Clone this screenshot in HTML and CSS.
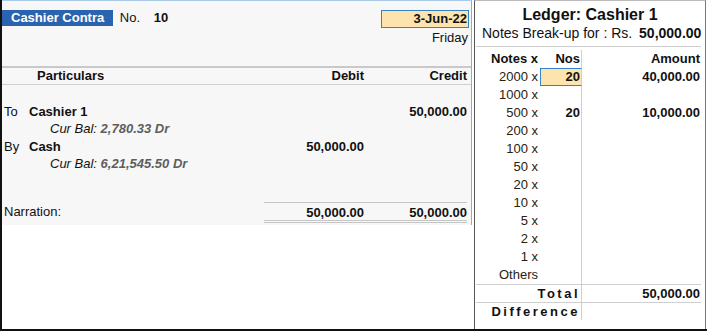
FILE: index.html
```html
<!DOCTYPE html>
<html lang="en">
<head>
  <meta charset="UTF-8">
  <title>Cashier Contra</title>
  <link rel="stylesheet" href="styles.css">
</head>
<body>
  <div class="screen">
    <div class="voucher">
      <div class="voucher-body">
        <div class="v-head">
          <div class="v-type">
            <span class="type-tag">Cashier Contra</span>
            <span class="no-lbl">No.</span>
            <b>10</b>
          </div>
          <div class="v-date">
            <span class="date-box">3-Jun-22</span>
            <span class="day">Friday</span>
          </div>
        </div>

        <div class="grid cols-head">
          <span class="part-h">Particulars</span>
          <span class="num">Debit</span>
          <span class="num">Credit</span>
        </div>

        <div class="entries">
          <div class="grid">
            <span><span class="dir">To</span><b>Cashier 1</b></span>
            <span></span>
            <b class="num">50,000.00</b>
          </div>
          <div class="bal"><i>Cur Bal:</i> <b>2,780.33 Dr</b></div>
          <div class="grid">
            <span><span class="dir">By</span><b>Cash</b></span>
            <b class="num">50,000.00</b>
            <span></span>
          </div>
          <div class="bal"><i>Cur Bal:</i> <b>6,21,545.50 Dr</b></div>
        </div>

        <div class="grid narration">
          <span>Narration:</span>
          <b class="num tot">50,000.00</b>
          <b class="num tot">50,000.00</b>
        </div>
      </div>
    </div>

    <div class="notes-panel">
      <div class="np-title">Ledger: Cashier 1</div>
      <div class="np-sub">Notes Break-up for : Rs. <b>50,000.00</b></div>

      <div class="np-table">
        <div class="np-row np-head">
          <span>Notes x</span><span>Nos</span><span>Amount</span>
        </div>
        <div class="np-row"><span>2000 x</span><span class="nos-input">20</span><b>40,000.00</b></div>
        <div class="np-row"><span>1000 x</span><span></span><span></span></div>
        <div class="np-row"><span>500 x</span><b>20</b><b>10,000.00</b></div>
        <div class="np-row"><span>200 x</span><span></span><span></span></div>
        <div class="np-row"><span>100 x</span><span></span><span></span></div>
        <div class="np-row"><span>50 x</span><span></span><span></span></div>
        <div class="np-row"><span>20 x</span><span></span><span></span></div>
        <div class="np-row"><span>10 x</span><span></span><span></span></div>
        <div class="np-row"><span>5 x</span><span></span><span></span></div>
        <div class="np-row"><span>2 x</span><span></span><span></span></div>
        <div class="np-row"><span>1 x</span><span></span><span></span></div>
        <div class="np-row"><span>Others</span><span></span><span></span></div>
        <div class="np-row np-sum"><span class="spaced">Total</span><b>50,000.00</b></div>
        <div class="np-row np-sum np-diff"><span class="spaced">Difference</span><b></b></div>
      </div>
    </div>
  </div>
</body>
</html>
```

FILE: styles.css
```css
body {
  margin: 0;
  font-family: 'Liberation Sans', Arial, sans-serif;
  font-size: 13px;
  color: #111;
  background: white;
}

.screen {
  width: 707px;
  height: 331px;
  box-sizing: border-box;
  border-left: 2px solid #111;
  border-bottom: 2px solid #111;
  display: flex;
  gap: 2px;
}

/* Voucher (left) */
.voucher {
  width: 470px;
}

.voucher-body {
  height: 225px;
  box-sizing: border-box;
  background: #f7f7f7;
  border-top: 1px solid #a9cbe8;
  border-right: 1px solid #7fb0dc;
}

.v-head {
  display: flex;
  justify-content: space-between;
  padding: 9px 2px 0 0;
  height: 56px;
}

.type-tag {
  display: inline-block;
  background: #2b64ae;
  color: white;
  font-weight: bold;
  padding: 0 9px 0 9px;
  line-height: 16px;
}

.no-lbl {
  margin: 0 10px 0 3px;
}

.v-date {
  display: flex;
  flex-direction: column;
  align-items: flex-end;
}

.date-box {
  width: 88px;
  text-align: right;
  padding: 0 1px;
  box-sizing: border-box;
  background: #fde3ad;
  border: 1px solid #3283c7;
  font-weight: bold;
  line-height: 16px;
}

.day {
  margin-top: 2px;
  line-height: 16px;
  padding-right: 1px;
}

.grid {
  display: grid;
  grid-template-columns: 262px 100px 103px;
}

.num {
  text-align: right;
}

.cols-head {
  border-top: 2px solid #c9c9c9;
  border-bottom: 1px solid #cfcfcf;
  line-height: 16px;
  font-weight: bold;
}

.part-h {
  padding-left: 35px;
}

.entries {
  padding-top: 18px;
  height: 98px;
  line-height: 17.4px;
}

.dir {
  display: inline-block;
  width: 25px;
  padding-left: 2px;
}

.bal {
  padding-left: 48px;
}

.bal b {
  font-style: italic;
  color: #5e5e5e;
}

.narration {
  line-height: 15px;
  margin-top: 1px;
}

.narration > span {
  padding-left: 2px;
  padding-top: 2px;
}

.tot {
  border-top: 1px solid #c6c6c6;
  border-bottom: 3px double #c6c6c6;
  padding-top: 2px;
}

/* Notes break-up (right) */
.notes-panel {
  flex: 1;
  border-left: 1px solid #555;
  border-right: 1px solid #777;
  border-top: 1px solid #bbb;
  margin-right: 1px;
}

.np-title {
  text-align: center;
  font-weight: bold;
  font-size: 16px;
  line-height: 18px;
  padding-top: 5px;
}

.np-sub {
  padding-left: 7px;
  line-height: 18px;
  font-size: 14px;
}

.np-sub b {
  margin-left: 3px;
}

.np-table {
  margin: 4px 4px 0 1px;
  border-top: 1px solid #cfcfcf;
}

.np-row {
  display: grid;
  grid-template-columns: 64px 42px 1fr;
  line-height: 18px;
  color: #2a2110;
}

.np-row > * {
  text-align: right;
}

.np-row > :nth-child(1) {
  padding-right: 2px;
}

.np-row > :nth-child(2) {
  border-right: 1px solid #cfcfcf;
  padding-right: 1px;
}

.np-row > :nth-child(3) {
  padding-right: 1px;
}

.np-row b {
  color: #111;
}

.np-head {
  font-weight: bold;
  color: #111;
  padding-top: 3px;
}

.nos-input {
  background: #fde3ad;
  border: 1px solid #3283c7;
  font-weight: bold;
  color: #111;
  line-height: 16px;
}

.np-sum {
  grid-template-columns: 106px 1fr;
  border-top: 1px solid #cfcfcf;
  line-height: 17px;
}

.np-sum > :nth-child(1) {
  border-right: 1px solid #cfcfcf;
  padding-right: 1px;
}

.np-sum > :nth-child(2) {
  border-right: none;
}

.spaced {
  font-weight: bold;
  letter-spacing: 2.5px;
  color: #111;
}
```
